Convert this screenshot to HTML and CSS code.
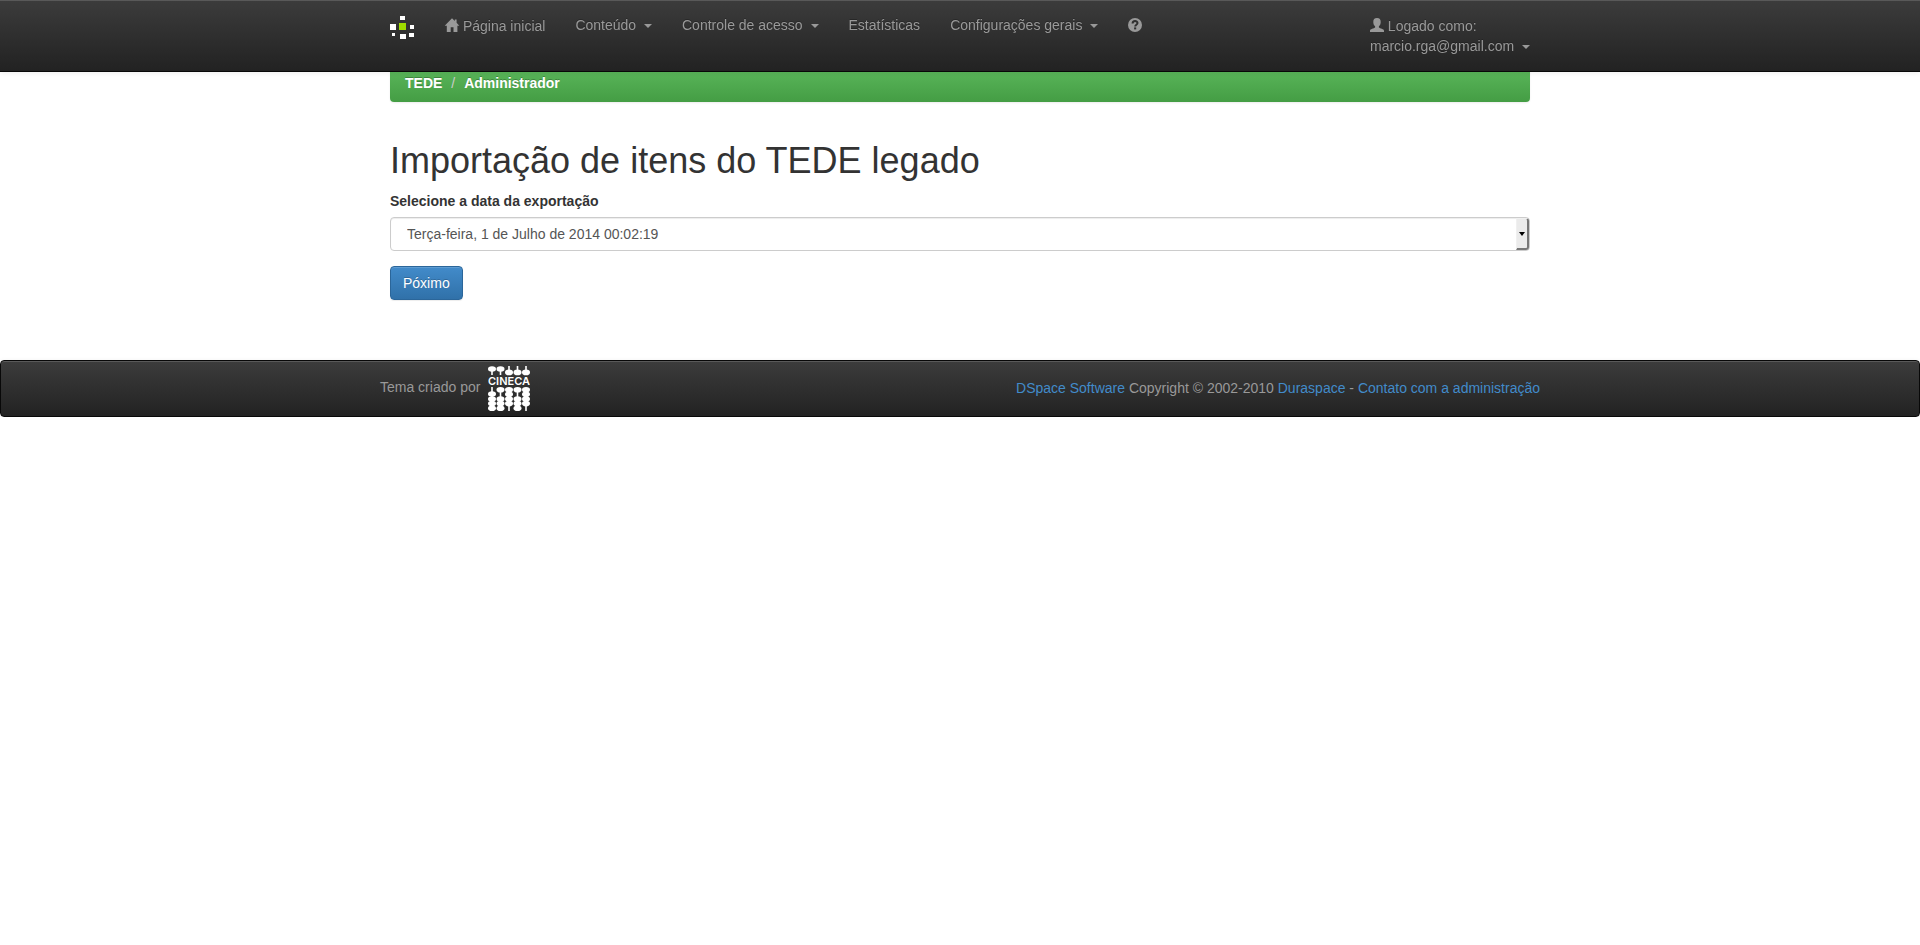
FILE: index.html
```html
<!DOCTYPE html>
<html lang="pt-BR">
<head>
<meta charset="utf-8">
<title>Importação de itens do TEDE legado</title>
<link rel="stylesheet" href="styles.css">
</head>
<body>
<header class="navbar navbar-top">
  <div class="container nav-row">
    <a class="brand" href="#" aria-label="DSpace">
      <svg width="25" height="25" viewBox="0 0 25 25" shape-rendering="crispEdges">
        <g fill="#fff">
          <rect x="10" y="1" width="5" height="4"/>
          <rect x="0" y="9" width="6" height="6"/>
          <rect x="20" y="10" width="4" height="4"/>
          <rect x="2" y="18" width="3" height="3"/>
          <rect x="10" y="19" width="6" height="5"/>
          <rect x="19" y="18" width="5" height="4"/>
        </g>
        <rect x="9" y="8" width="7" height="7" fill="#9fdc00"/>
      </svg>
    </a>
    <nav class="menu">
      <a href="#"><svg class="icon" viewBox="0 0 14 14"><path d="M7 0.2 L9.8 3 V1.5 H11.6 V4.8 L14.3 7.8 H12.4 V14 H8.5 V9.3 H5.7 V14 H1.8 V7.8 H-0.3 Z"/></svg> Página inicial</a>
      <a href="#">Conteúdo <b class="caret"></b></a>
      <a href="#">Controle de acesso <b class="caret"></b></a>
      <a href="#">Estatísticas</a>
      <a href="#">Configurações gerais <b class="caret"></b></a>
      <a href="#" aria-label="Ajuda"><svg class="icon" viewBox="0 0 14 14"><circle cx="7" cy="7" r="7"/><path class="mark" d="M4.6 5.5 C4.6 2.3 9.5 2.4 9.5 5.1 C9.5 6.8 7.2 6.8 7.2 8.6"/><rect class="dot" x="6.1" y="9.4" width="2.1" height="2"/></svg></a>
    </nav>
    <nav class="menu menu-user">
      <a href="#"><svg class="icon" viewBox="0 0 14 14"><path d="M7 0 C9.6 0 10.9 1.6 10.7 4.2 C10.6 6 10 7.4 8.9 8.3 V9.5 C10 10.4 14 10.9 14 12.7 V14 H0 V12.7 C0 10.9 4 10.4 5.1 9.5 V8.3 C4 7.4 3.4 6 3.3 4.2 C3.1 1.6 4.4 0 7 0 Z"/></svg> Logado como:<br>marcio.rga@gmail.com <b class="caret"></b></a>
    </nav>
  </div>
</header>

<main class="container page">
  <ol class="breadcrumb">
    <li><a href="#">TEDE</a></li>
    <li><a href="#">Administrador</a></li>
  </ol>
  <h1>Importação de itens do TEDE legado</h1>
  <form>
    <label for="export-date">Selecione a data da exportação</label>
    <div class="select-wrap">
      <select id="export-date" class="form-control">
        <option>Terça-feira, 1 de Julho de 2014 00:02:19</option>
      </select>
      <span class="select-arrow"></span>
    </div>
    <button type="button" class="btn">Póximo</button>
  </form>
</main>

<footer class="navbar footer">
  <div class="container footer-row">
    <div class="theme"><span class="theme-text">Tema criado por</span>
      <a href="#" aria-label="CINECA"><svg class="cineca" width="42" height="45" viewBox="0 0 42 45">
        <g fill="#fff">
          <ellipse cx="4" cy="3" rx="4" ry="2.8"/><ellipse cx="12.5" cy="3" rx="4" ry="2.8"/>
          <ellipse cx="21" cy="6.4" rx="4" ry="2.8"/><ellipse cx="29.5" cy="6.4" rx="4" ry="2.8"/><ellipse cx="38" cy="6.4" rx="4" ry="2.8"/>
          <text class="cineca-name" x="21" y="19" text-anchor="middle">CINECA</text>
          <ellipse cx="4" cy="28" rx="4" ry="2.8"/><ellipse cx="4" cy="33" rx="4" ry="2.8"/><ellipse cx="4" cy="37.6" rx="4" ry="2.8"/><ellipse cx="4" cy="42.2" rx="4" ry="2.8"/>
          <ellipse cx="12.5" cy="23.7" rx="4" ry="2.8"/><ellipse cx="12.5" cy="33" rx="4" ry="2.8"/><ellipse cx="12.5" cy="37.6" rx="4" ry="2.8"/><ellipse cx="12.5" cy="42.2" rx="4" ry="2.8"/>
          <ellipse cx="21" cy="23.7" rx="4" ry="2.8"/><ellipse cx="21" cy="28.3" rx="4" ry="2.8"/><ellipse cx="21" cy="33" rx="4" ry="2.8"/><ellipse cx="21" cy="37.6" rx="4" ry="2.8"/>
          <ellipse cx="29.5" cy="23.7" rx="4" ry="2.8"/><ellipse cx="29.5" cy="33" rx="4" ry="2.8"/><ellipse cx="29.5" cy="37.6" rx="4" ry="2.8"/><ellipse cx="29.5" cy="42.2" rx="4" ry="2.8"/>
          <ellipse cx="38" cy="23.7" rx="4" ry="2.8"/><ellipse cx="38" cy="28.3" rx="4" ry="2.8"/><ellipse cx="38" cy="33" rx="4" ry="2.8"/><ellipse cx="38" cy="37.6" rx="4" ry="2.8"/>
        </g>
        <path d="M4 3V9M12.5 3V9M21 0V6M29.5 0V6M38 0V6M4 21V44M12.5 22V44M21 22V45M29.5 22V44M38 22V45" stroke="#fff" stroke-width="1.6"/>
      </svg></a>
    </div>
    <div class="credits"><a href="#">DSpace Software</a> Copyright © 2002-2010 <a href="#">Duraspace</a> - <a href="#">Contato com a administração</a></div>
  </div>
</footer>
</body>
</html>
```
FILE: styles.css
```css
* { box-sizing: border-box; }
body {
  margin: 0;
  font: 14px/20px "Liberation Sans", Arial, sans-serif;
  color: #333;
  background: #fff;
}
a { color: #428bca; text-decoration: none; }
.container {
  max-width: 1170px;
  margin: 0 auto;
  padding: 0 15px;
}
.navbar {
  background: linear-gradient(#3c3c3c, #222);
  box-shadow: inset 0 1px 0 rgba(255, 255, 255, .15), 0 1px 5px rgba(0, 0, 0, .075);
  color: #999;
}
.navbar-top {
  position: fixed;
  top: 0;
  left: 0;
  right: 0;
  z-index: 10;
  border-bottom: 1px solid #080808;
}
.nav-row { display: flex; }
.brand { padding: 15px 15px 15px 0; }
.brand svg { display: block; }
.menu { display: flex; }
.menu a {
  padding: 15px;
  color: #999;
  text-shadow: 0 -1px 0 rgba(0, 0, 0, .25);
}
.menu-user { margin: 0 -15px 0 auto; }
.icon {
  width: 14px;
  height: 14px;
  margin-top: 3px;
  vertical-align: -1px;
  fill: #999;
  overflow: visible;
}
.mark { fill: none; stroke: #2f2f2f; stroke-width: 2; }
.dot { fill: #2f2f2f; }
.caret {
  display: inline-block;
  margin-left: 4px;
  vertical-align: middle;
  border-top: 4px solid #999;
  border-left: 4px solid transparent;
  border-right: 4px solid transparent;
}
.page { padding-top: 66px; }
.breadcrumb {
  display: flex;
  margin: 0;
  padding: 7px 15px 9px;
  list-style: none;
  border-radius: 4px;
  background: linear-gradient(#5cb85c, #449d44);
  box-shadow: 0 1px 2px rgba(0, 0, 0, .075);
  font-weight: bold;
}
.breadcrumb a { color: #fff; text-shadow: 0 -1px 0 rgba(0, 0, 0, .25); }
.breadcrumb li + li::before {
  content: "/\00a0";
  padding: 0 5px 0 9px;
  color: #ccc;
  font-weight: normal;
}
h1 {
  margin: 39px 0 10px;
  font-size: 36px;
  line-height: 40px;
  font-weight: normal;
}
label {
  display: block;
  margin-bottom: 6px;
  font-weight: bold;
}
.select-wrap { position: relative; margin-bottom: 15px; }
.form-control {
  display: block;
  appearance: none;
  width: 100%;
  height: 34px;
  padding: 6px 16px;
  border: 1px solid #ccc;
  border-radius: 4px;
  background: #fff;
  box-shadow: inset 0 1px 1px rgba(0, 0, 0, .075);
  font: inherit;
  color: #555;
}
.select-arrow {
  position: absolute;
  top: 1px;
  right: 1px;
  bottom: 1px;
  display: grid;
  place-items: center;
  width: 13px;
  border: 1px solid;
  border-color: #f0f0f0 #777 #777 #f0f0f0;
  border-width: 1px 2px 2px 1px;
  border-radius: 0 3px 3px 0;
  background: #ebebeb;
  pointer-events: none;
}
.select-arrow::before {
  content: "";
  border-top: 4px solid #000;
  border-left: 3px solid transparent;
  border-right: 3px solid transparent;
}
.btn {
  display: block;
  padding: 6px 12px;
  border: 1px solid #2b669a;
  border-radius: 4px;
  background: linear-gradient(#428bca, #3071a9);
  box-shadow: inset 0 1px 0 rgba(255, 255, 255, .15), 0 1px 1px rgba(0, 0, 0, .075);
  font: inherit;
  color: #fff;
  text-shadow: 0 -1px 0 rgba(0, 0, 0, .2);
}
.footer {
  margin-top: 60px;
  border: 1px solid #080808;
  border-radius: 4px;
}
.footer-row {
  display: flex;
  justify-content: space-between;
  align-items: center;
  padding: 5px;
}
.theme, .theme a { display: flex; align-items: center; }
.theme { gap: 8px; }
.theme-text { padding-bottom: 4px; }
.credits { padding-bottom: 2px; }
.cineca-name { font: 600 11px Inter, sans-serif; }
```
